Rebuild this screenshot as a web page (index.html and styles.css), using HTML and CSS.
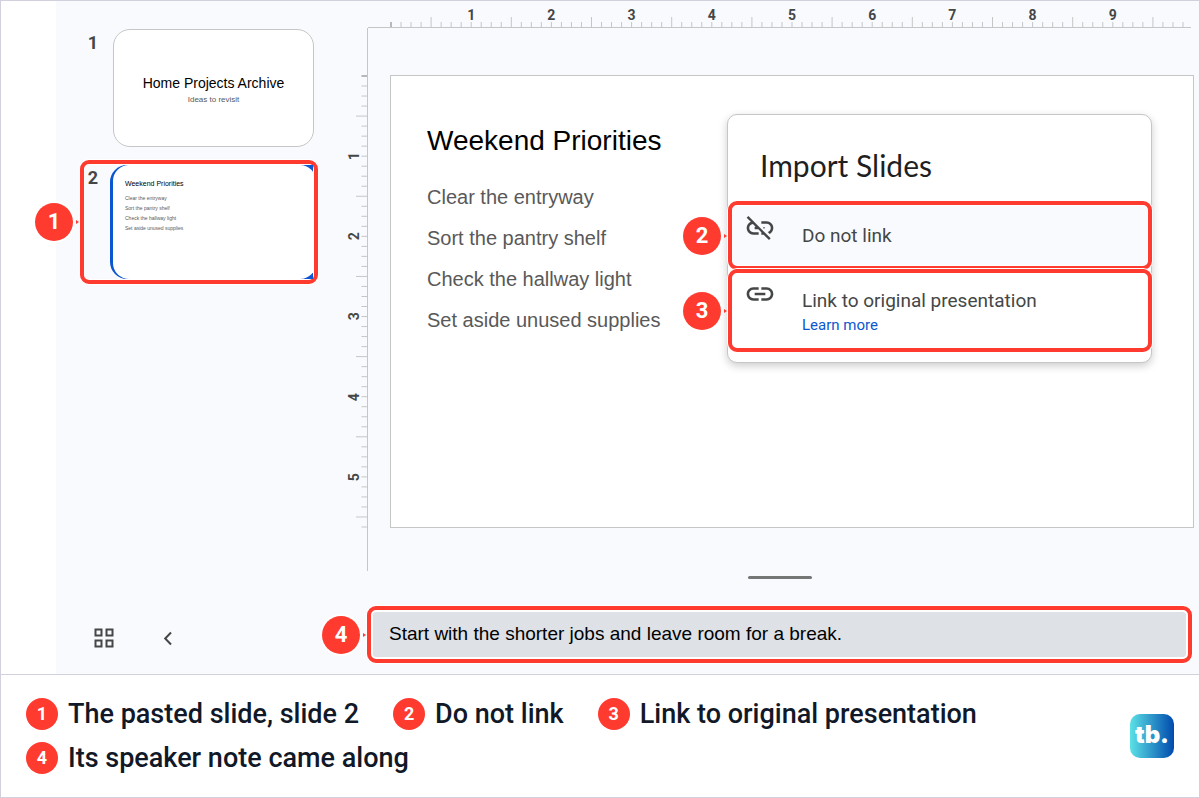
FILE: index.html
```html
<!DOCTYPE html>
<html lang="en">
<head>
<meta charset="utf-8">
<meta name="viewport" content="width=device-width, initial-scale=1">
<title>Import Slides</title>
<link rel="stylesheet" href="styles.css">
</head>
<body>
<main class="figure">
  <div class="app">
    <aside class="filmstrip">
      <ol class="slides">
        <li class="slide-item">
          <span class="slide-number">1</span>
          <button class="thumb thumb-title" type="button">
            <span class="thumb-heading">Home Projects Archive</span>
            <span class="thumb-sub">Ideas to revisit</span>
          </button>
        </li>
        <li class="slide-item callout">
          <span class="badge">1</span>
          <span class="slide-number">2</span>
          <button class="thumb-ring" type="button">
            <span class="thumb-list">
              <span class="mini-heading">Weekend Priorities</span>
              <span class="mini-line">Clear the entryway</span>
              <span class="mini-line">Sort the pantry shelf</span>
              <span class="mini-line">Check the hallway light</span>
              <span class="mini-line">Set aside unused supplies</span>
            </span>
          </button>
        </li>
      </ol>
      <nav class="strip-tools">
        <button class="icon-button" type="button" aria-label="Grid view">
          <svg width="20" height="20" viewBox="0 0 20 20" fill="none" stroke="#444746" stroke-width="2"><path d="M1.5 1.5h6v6h-6zM12.5 1.5h6v6h-6zM1.5 12.5h6v6h-6zM12.5 12.5h6v6h-6z"/></svg>
        </button>
        <button class="icon-button" type="button" aria-label="Hide filmstrip">
          <svg width="20" height="20" viewBox="0 0 20 20" fill="none" stroke="#444746" stroke-width="2"><path d="M13 4.500 7.200 10.500 13 16.500"/></svg>
        </button>
      </nav>
    </aside>

    <section class="workspace">
      <div class="ruler-x">
        <div class="scale-x" id="scale-x">
          <span>1</span><span>2</span><span>3</span><span>4</span><span>5</span><span>6</span><span>7</span><span>8</span><span>9</span>
        </div>
      </div>
      <div class="ruler-y">
        <div class="scale-y" id="scale-y">
          <span>1</span><span>2</span><span>3</span><span>4</span><span>5</span>
        </div>
      </div>
      <div class="canvas">
        <article class="slide">
          <h1 class="slide-heading">Weekend Priorities</h1>
          <p class="slide-line">Clear the entryway</p>
          <p class="slide-line">Sort the pantry shelf</p>
          <p class="slide-line">Check the hallway light</p>
          <p class="slide-line">Set aside unused supplies</p>

          <section class="dialog" role="dialog" aria-labelledby="dialog-title">
            <h2 class="dialog-title" id="dialog-title">Import Slides</h2>
            <div class="option option-plain callout">
              <span class="badge">2</span>
              <svg class="option-icon" viewBox="0 0 24 24" fill="#444746"><path d="M17 7h-4v1.900h4c1.710 0 3.100 1.390 3.100 3.100 0 1.430-.98 2.630-2.310 2.980l1.460 1.460C20.880 15.610 22 13.950 22 12c0-2.760-2.240-5-5-5zM2 4.270l3.110 3.110C3.290 8.120 2 9.910 2 12c0 2.760 2.240 5 5 5h4v-1.900H7c-1.710 0-3.100-1.390-3.100-3.100 0-1.590 1.210-2.900 2.760-3.070L8.730 11H8v2h2.730L13 15.270V17h1.730l4.010 4L20 19.740 3.270 3 2 4.270z"/><circle cx="15" cy="11.900" r=".6"/></svg>
              <button class="option-label" type="button">Do not link</button>
            </div>
            <div class="option option-linked callout">
              <span class="badge">3</span>
              <svg class="option-icon" viewBox="0 0 24 24" fill="#444746"><path d="M3.900 12c0-1.710 1.390-3.100 3.100-3.100h4V7H7c-2.760 0-5 2.240-5 5s2.240 5 5 5h4v-1.900H7c-1.710 0-3.100-1.390-3.100-3.100zM8 13h8v-2H8v2zm9-6h-4v1.900h4c1.710 0 3.100 1.390 3.100 3.100s-1.390 3.100-3.100 3.100h-4V17h4c2.760 0 5-2.240 5-5s-2.240-5-5-5z"/></svg>
              <div class="option-text">
                <button class="option-label" type="button">Link to original presentation</button>
                <a class="learn-more" href="#">Learn more</a>
              </div>
            </div>
          </section>
        </article>
      </div>
      <div class="notes-pane">
        <div class="notes-handle"></div>
        <div class="notes callout">
          <span class="badge">4</span>
          <input class="notes-input" type="text" aria-label="Speaker notes" value="Start with the shorter jobs and leave room for a break.">
        </div>
      </div>
    </section>
  </div>

  <footer class="legend">
    <ol class="legend-list">
      <li><span class="dot">1</span>The pasted slide, slide 2</li>
      <li><span class="dot">2</span>Do not link</li>
      <li><span class="dot">3</span>Link to original presentation</li>
      <li><span class="dot">4</span>Its speaker note came along</li>
    </ol>
    <div class="logo">tb.</div>
  </footer>
</main>
<script src="rulers.js"></script>
</body>
</html>
```

FILE: styles.css
```css
* { box-sizing: border-box; }

body {
  margin: 0;
  background: #fff;
  font-family: Roboto, "Liberation Sans", sans-serif;
}

button {
  border: 0;
  padding: 0;
  margin: 0;
  background: none;
  font: inherit;
  color: inherit;
  text-align: left;
  cursor: pointer;
}

ol { list-style: none; margin: 0; padding: 0; }

.figure {
  border: 1px solid #d0d1dc;
  background: #fff;
}

.app {
  display: grid;
  grid-template-columns: 290px 1fr;
  margin-left: 55px;
  background: #f9fafe;
}

/* Highlighted areas and their numbered badges */
.callout {
  position: relative;
  border: 4px solid #ff3b30;
  border-radius: 9px;
  box-shadow: 0 0 0 1px #fff, inset 0 0 0 1px #fff;
}

.badge {
  position: absolute;
  left: -49px;
  top: calc(50% - 19px);
  width: 38px;
  height: 38px;
  border-radius: 50%;
  background: #ff3b30;
  box-shadow: 0 0 0 2px #fff;
  color: #fff;
  font: 700 22px/38px Roboto, sans-serif;
  text-align: center;
}

.badge::after {
  content: "";
  position: absolute;
  left: 41px;
  top: 17px;
  border: 2px solid transparent;
  border-left: 3px solid #ff3b30;
  border-right: 0;
}

/* Filmstrip */
.filmstrip {
  display: flex;
  flex-direction: column;
  justify-content: space-between;
  padding: 24px 28px 26px 24px;
}

.slides { display: grid; gap: 9px; }

.slide-item {
  display: grid;
  grid-template-columns: 18px 1fr;
  column-gap: 11px;
  border: 4px solid transparent;
}

.slide-item.callout { border-color: #ff3b30; }

.slide-number {
  color: #444746;
  font: 700 18px/28px Roboto, sans-serif;
  text-align: center;
}

.thumb {
  display: flex;
  flex-direction: column;
  align-items: center;
  height: 118px;
  padding-top: 43px;
  border: 1px solid #c4c7c5;
  border-radius: 17px;
  background: #fff;
  font-family: "Liberation Sans", Arial, sans-serif;
}

.thumb-heading { font-size: 14px; line-height: 20px; color: #000; }
.thumb-sub { font-size: 8px; line-height: 14px; color: #595959; }

.thumb-ring {
  height: 114px;
  margin: 1px 1px 1px -3px;
  padding-left: 3px;
  border-radius: 17px 0 0 17px;
  background: #0b57d0;
  overflow: hidden;
}

.thumb-list {
  display: flex;
  flex-direction: column;
  height: 100%;
  margin-right: -3px;
  padding: 13px 12px 0;
  border-radius: 16px;
  background: #fff;
  font-family: "Liberation Sans", Arial, sans-serif;
}

.mini-heading { font-size: 7px; line-height: 12px; margin-bottom: 3px; color: #000; }
.mini-line { font-size: 5px; line-height: 10px; color: #595959; }

.strip-tools { display: flex; gap: 44px; padding-left: 14px; }
.icon-button { width: 20px; height: 20px; }
.icon-button svg { display: block; }

/* Rulers and slide canvas */
.workspace {
  display: grid;
  grid-template-columns: 22px 1fr;
  grid-template-rows: 27px auto auto;
}

.ruler-x {
  grid-column: 2;
  margin-right: 8px;
  padding-left: 23px;
  border-bottom: 1px solid #c4c7c5;
}

.scale-x {
  position: relative;
  display: grid;
  grid-template-columns: 1fr repeat(9, 2fr) 1fr;
  height: 26px;
  margin-right: -2px;
}

.scale-x::before,
.scale-y::before { content: ""; }

.scale-x span,
.scale-y span {
  color: #444746;
  font: 700 14px/28px Roboto, sans-serif;
  text-align: center;
}

.ruler-y {
  grid-row: 2;
  padding: 48px 0 44px;
  border-right: 1px solid #c4c7c5;
}

.scale-y {
  position: relative;
  display: grid;
  grid-template-rows: 4fr repeat(5, 8fr) 1fr;
  height: 100%;
}

.scale-y span {
  writing-mode: vertical-rl;
  transform: rotate(180deg);
  line-height: 16px;
  justify-self: start;
}

.ticks {
  position: absolute;
  right: 0;
  bottom: 0;
  overflow: visible;
  fill: none;
  stroke: #c4c7c5;
}

.ticks path { vector-effect: non-scaling-stroke; }
.ticks .origin { stroke: #747775; }
.ticks-x { width: 100%; height: 10px; }
.ticks-y { width: 11px; height: 100%; }

.canvas { padding: 47px 5px 43px 22px; }

.slide {
  position: relative;
  aspect-ratio: 804 / 453;
  padding: 45px 36px 0;
  border: 1px solid #c4c7c5;
  background: #fff;
  font-family: "Liberation Sans", Arial, sans-serif;
}

.slide-heading {
  margin: 0 0 16px;
  font-size: 28px;
  font-weight: 400;
  line-height: 40px;
}

.slide-line {
  margin: 0;
  font-size: 20px;
  line-height: 41px;
  color: #595959;
}

/* Import dialog */
.dialog {
  position: absolute;
  top: 38px;
  right: 41px;
  width: 425px;
  padding-bottom: 10px;
  border: 1px solid #c4c7c5;
  border-radius: 10px;
  background: #fff;
  box-shadow: 0 3px 8px rgba(0, 0, 0, .2);
  font-family: Roboto, sans-serif;
}

.dialog-title {
  margin: 0;
  padding: 30px 32px 16px;
  font: 400 30px/40px Lato, sans-serif;
  color: #1f1f1f;
}

.option {
  display: flex;
  gap: 26px;
  margin-right: -1px;
  padding: 0 12px;
}

.option-plain { height: 69px; padding-top: 7px; background: #f9fafe; }
.option-linked { height: 83px; margin-top: -1px; padding-top: 5px; }
.option-icon { flex: none; width: 32px; height: 32px; }
.option-text { padding-top: 11px; }

.option-label {
  display: block;
  font-size: 19px;
  line-height: 24px;
  color: #444746;
}

.option-plain .option-label { align-self: flex-start; padding-top: 12px; }

.learn-more {
  display: inline-block;
  font-size: 15px;
  line-height: 24px;
  color: #0b57d0;
  text-decoration: none;
}

/* Speaker notes */
.notes-pane {
  grid-column: 1 / -1;
  padding: 5px 7px 11px 21px;
}

.notes-handle {
  width: 64px;
  height: 3px;
  margin: 0 auto 27px;
  border-radius: 2px;
  background: #747775;
}

.notes {
  padding: 2px;
  background: #fff;
}

.notes-input {
  display: block;
  width: 100%;
  height: 45px;
  padding: 0 16px 2px;
  border: 0;
  border-radius: 3px;
  background: #dee1e6;
  color: #000;
  font: 19px/24px "Liberation Sans", Arial, sans-serif;
}

/* Legend */
.legend {
  display: flex;
  align-items: center;
  justify-content: space-between;
  padding: 23px 25px;
  border-top: 1px solid #d0d1dc;
}

.legend-list {
  display: flex;
  flex-wrap: wrap;
  gap: 12px 34px;
}

.legend-list li {
  display: flex;
  align-items: center;
  gap: 10px;
  color: #111827;
  font-size: 27px;
  font-weight: 500;
  line-height: 32px;
}

.dot {
  width: 32px;
  height: 32px;
  border-radius: 50%;
  background: #ff3b30;
  color: #fff;
  font-size: 18px;
  font-weight: 700;
  text-align: center;
}

.logo {
  flex: none;
  width: 44px;
  height: 44px;
  border-radius: 10px;
  background: linear-gradient(90deg, #5ce1e6, #004aad);
  color: #fff;
  font: 900 24px/42px Inter, sans-serif;
  text-align: center;
}
```

FILE: rulers.js
```js
// Draws ruler ticks: eight per inch, a longer one on each half inch.
function drawTicks(hostId, axis, inches, lastTick) {
  const ns = "http://www.w3.org/2000/svg";
  const horizontal = axis === "x";
  const length = inches * 80;
  const depth = horizontal ? 10 : 11;
  const svg = document.createElementNS(ns, "svg");
  svg.setAttribute("class", "ticks ticks-" + axis);
  svg.setAttribute("viewBox", horizontal ? `0 0 ${length} ${depth}` : `0 0 ${depth} ${length}`);
  svg.setAttribute("preserveAspectRatio", "none");
  svg.setAttribute("aria-hidden", "true");
  for (let i = 0; i <= lastTick; i++) {
    const size = i % 8 === 4 ? depth : depth / 2;
    const path = document.createElementNS(ns, "path");
    const at = i * 10;
    path.setAttribute("d", horizontal
      ? `M${at} ${depth}V${depth - size}`
      : `M${depth} ${at}H${depth - size}`);
    if (i === 0) path.setAttribute("class", "origin");
    svg.appendChild(path);
  }
  document.getElementById(hostId).appendChild(svg);
}

drawTicks("scale-x", "x", 10, 79);
drawTicks("scale-y", "y", 5.625, 45);
```
